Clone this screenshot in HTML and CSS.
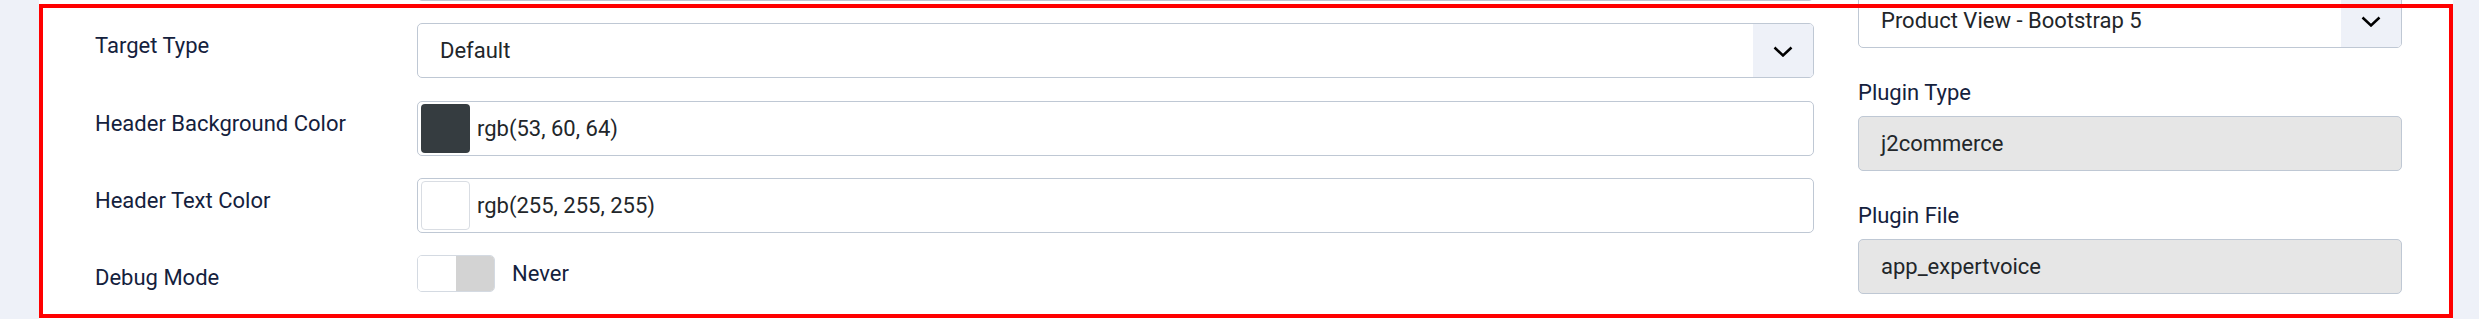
FILE: index.html
```html
<!DOCTYPE html>
<html lang="en">
<head>
<meta charset="utf-8">
<title>Plugin options</title>
<link rel="stylesheet" href="styles.css">
</head>
<body>
<div class="page">
  <div class="card">
    <div class="col-left">
      <div class="form-row">
        <div class="label"></div>
        <div class="control"></div>
      </div>
      <div class="form-row">
        <div class="label">Target Type</div>
        <div class="control select">
          <span class="value">Default</span>
          <span class="select-btn">
            <svg width="20" height="11" viewBox="0 0 20 11"><polyline points="1.5,1.5 10,9.5 18.5,1.5" fill="none" stroke="#000" stroke-width="2.5"/></svg>
          </span>
        </div>
      </div>
      <div class="form-row">
        <div class="label">Header Background Color</div>
        <div class="control color">
          <span class="swatch swatch-dark"></span>
          <span class="value">rgb(53, 60, 64)</span>
        </div>
      </div>
      <div class="form-row">
        <div class="label">Header Text Color</div>
        <div class="control color">
          <span class="swatch swatch-light"></span>
          <span class="value">rgb(255, 255, 255)</span>
        </div>
      </div>
      <div class="form-row">
        <div class="label">Debug Mode</div>
        <div class="switch-field">
          <span class="switch"><span class="switch-off"></span><span class="switch-knob"></span></span>
          <span class="switch-text">Never</span>
        </div>
      </div>
    </div>
    <div class="col-right">
      <div class="group">
        <div class="control select">
          <span class="value">Product View - Bootstrap 5</span>
          <span class="select-btn">
            <svg width="20" height="11" viewBox="0 0 20 11"><polyline points="1.5,1.5 10,9.5 18.5,1.5" fill="none" stroke="#000" stroke-width="2.5"/></svg>
          </span>
        </div>
      </div>
      <div class="group">
        <div class="glabel">Plugin Type</div>
        <div class="control readonly">j2commerce</div>
      </div>
      <div class="group">
        <div class="glabel">Plugin File</div>
        <div class="control readonly">app_expertvoice</div>
      </div>
    </div>
  </div>
  <div class="highlight"></div>
</div>
</body>
</html>
```
FILE: styles.css
```css
* { box-sizing: border-box; }
html, body { margin: 0; }
body {
  background: #eef1f8;
  font-family: Roboto, "Liberation Sans", sans-serif;
  font-size: 22px;
  line-height: 1.5;
  color: #22262a;
  overflow: hidden;
}
.page {
  position: relative;
  height: 319px;
  overflow: hidden;
}
.card {
  margin-left: 39px;
  width: 2414px;
  margin-top: -54px;
  background: #fff;
  display: grid;
  grid-template-columns: 1719px 544px;
  column-gap: 44px;
  padding: 0 51px 80px 56px;
}
.form-row {
  display: grid;
  grid-template-columns: 322px 1fr;
  margin-bottom: 22.25px;
}
.label, .glabel {
  color: #14213d;
}
.label { padding-top: 6px; }
.control {
  height: 55px;
  border: 1px solid #bfc8d4;
  border-radius: 5px;
  background: #fff;
  display: flex;
  align-items: center;
  overflow: hidden;
}
.select .value {
  flex: 1;
  padding-left: 22px;
}
.select-btn {
  width: 60px;
  align-self: stretch;
  background: #eef1f8;
  display: flex;
  align-items: center;
  justify-content: center;
}
.select-btn svg { margin-top: 2px; }
.color { padding: 0 3px; }
.swatch {
  width: 49px;
  height: 49px;
  border-radius: 4px;
  flex: none;
}
.swatch-dark { background: #353c40; }
.swatch-light { background: #fff; border: 1px solid #d9dde3; }
.color .value { margin-left: 7px; }
.switch-field {
  display: flex;
  align-items: center;
  gap: 17px;
  height: 37px;
}
.switch {
  display: flex;
  width: 78px;
  height: 37px;
  border: 1px solid #d4dae2;
  border-radius: 5px;
  overflow: hidden;
}
.switch-off { flex: 1; background: #fff; }
.switch-knob { flex: 1; background: #d3d3d3; }
.switch-text { color: #14213d; }
.col-right { padding-top: 47.3px; }
.group { margin-bottom: 28px; }
.glabel { margin-bottom: 7px; }
.readonly {
  background: #e6e6e6;
  padding-left: 22px;
}
.highlight {
  position: absolute;
  left: 39px;
  top: 4px;
  width: 2414px;
  height: 314px;
  border: 4px solid #f00;
  pointer-events: none;
}
```
